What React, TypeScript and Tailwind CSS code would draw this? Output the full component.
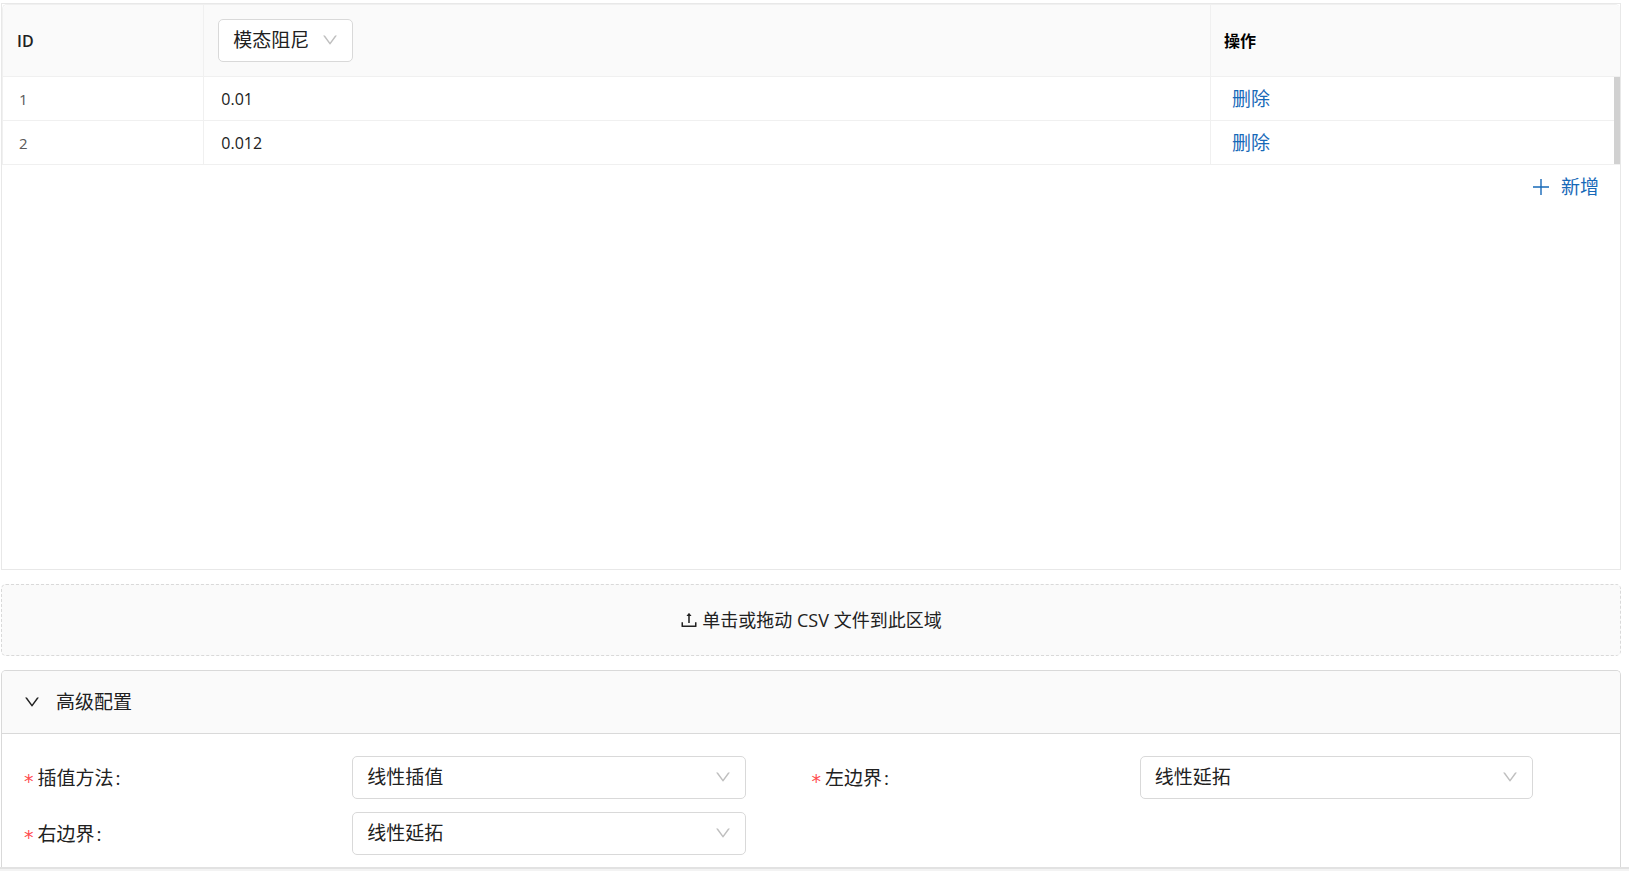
import { useState } from "react";

const rows = [
  { id: 1, value: "0.01" },
  { id: 2, value: "0.012" },
];

function ChevronDown({ className }: { className: string }) {
  return (
    <svg viewBox="64 64 896 896" fill="currentColor" aria-hidden="true" className={className}>
      <path d="M884 256h-75c-5.100 0-9.900 2.500-12.900 6.600L512 654.200 227.900 262.600c-3-4.100-7.800-6.600-12.900-6.600h-75c-6.500 0-10.300 7.400-6.500 12.700l352.600 486.100c12.800 17.600 39 17.600 51.700 0l352.600-486.100c3.900-5.300.1-12.700-6.400-12.700z" />
    </svg>
  );
}

function UploadIcon() {
  return (
    <svg viewBox="64 64 896 896" fill="currentColor" aria-hidden="true" className="size-[18px]">
      <path d="M400 317.700h73.900V656c0 4.400 3.600 8 8 8h60c4.400 0 8-3.600 8-8V317.700H624c6.700 0 10.400-7.700 6.300-12.900L518.300 163a8 8 0 0 0-12.600 0l-112 141.700c-4.100 5.300-.4 13 6.300 13zM878 626h-60c-4.400 0-8 3.600-8 8v154H214V634c0-4.400-3.600-8-8-8h-60c-4.400 0-8 3.600-8 8v198c0 17.700 14.300 32 32 32h684c17.700 0 32-14.300 32-32V634c0-4.400-3.600-8-8-8z" />
    </svg>
  );
}

function Select({ id, label, options }: { id: string; label?: string; options: string[] }) {
  return (
    <div className="relative">
      <select
        id={id}
        aria-label={label}
        className="block h-[43px] w-full appearance-none rounded-[5px] border border-[#d9d9d9] bg-white pr-10 pb-px pl-3.5 text-[19px] leading-6 text-[#212121]"
      >
        {options.map((o) => (
          <option key={o}>{o}</option>
        ))}
      </select>
      <ChevronDown className="pointer-events-none absolute top-[13px] right-[15px] size-4 text-[#bfbfbf]" />
    </div>
  );
}

function Field({ id, label, options }: { id: string; label: string; options: string[] }) {
  return (
    <div className="grid grid-cols-[10fr_12fr_2fr] items-center">
      <label htmlFor={id} className="flex items-center text-[19px] leading-6">
        <span className="mr-1 pt-1.5 font-['DejaVu_Sans',sans-serif] text-[#ff4d4f]">*</span>
        {label}
        <span className="ml-0.5">:</span>
      </label>
      <Select id={id} options={options} />
    </div>
  );
}

export default function App() {
  const [open, setOpen] = useState(true);
  return (
    <div className="flex min-h-screen flex-col bg-white pt-[3px] font-['Open_Sans','Noto_Sans_CJK_SC',sans-serif] text-[#212121]">
      <main className="mr-2 ml-px flex flex-1 flex-col gap-3.5">
        <section className="flex-1 border border-[#e8e8e8]">
          <div className="relative">
            <table className="w-full table-fixed border-separate border-spacing-0 rounded-t-[5px] border-t border-l border-[#f0f0f0] text-left">
              <colgroup>
                <col className="w-[12.450%]" />
                <col />
                <col className="w-[25.300%]" />
              </colgroup>
              <thead>
                <tr className="h-[72px]">
                  <th className="rounded-tl-[5px] border-r border-b border-[#f0f0f0] bg-[#fafafa] px-3.5 text-base font-semibold">ID</th>
                  <th className="border-r border-b border-[#f0f0f0] bg-[#fafafa] px-3.5 font-normal">
                    <div className="w-[135px]">
                      <Select id="kind" label="阻尼类型" options={["模态阻尼", "结构阻尼"]} />
                    </div>
                  </th>
                  <th className="rounded-tr-[5px] border-b border-[#f0f0f0] bg-[#fafafa] px-[13px] text-base font-bold text-black">操作</th>
                </tr>
              </thead>
              <tbody>
                {rows.map((row) => (
                  <tr key={row.id} className="h-11">
                    <td className="border-r border-b border-[#f0f0f0] px-4 pt-px text-[15px] text-[#595959]">{row.id}</td>
                    <td className="border-r border-b border-[#f0f0f0] px-[17px] pt-px text-base">{row.value}</td>
                    <td className="border-b border-[#f0f0f0] px-[21px] text-[19px] leading-6">
                      <button type="button" className="block text-[#1769b8]">删除</button>
                    </td>
                  </tr>
                ))}
              </tbody>
            </table>
            <div className="absolute right-0 bottom-px h-[87px] w-1.5 bg-[#d1d1d1]" />
          </div>
          <div className="flex justify-end pt-2.5 pr-[21px]">
            <button type="button" className="flex items-center gap-3 text-[19px] leading-6 text-[#1769b8]">
              <svg viewBox="0 0 16 16" fill="none" stroke="currentColor" strokeWidth="1.400" aria-hidden="true" className="size-4">
                <path d="M8 0v16M0 8h16" />
              </svg>
              新增
            </button>
          </div>
        </section>

        <button
          type="button"
          className="flex h-[72px] items-center justify-center gap-1 rounded-[5px] border border-dashed border-[#d9d9d9] bg-[#fafafa] text-lg"
        >
          <UploadIcon />
          单击或拖动 CSV 文件到此区域
        </button>

        <section className="rounded-t-[5px] border border-b-0 border-[#d9d9d9]">
          <button
            type="button"
            aria-expanded={open}
            onClick={() => setOpen(!open)}
            className="flex h-[63px] w-full items-center gap-4 rounded-t-[4px] border-b border-[#d9d9d9] bg-[#fafafa] px-[22px] text-[19px]"
          >
            <ChevronDown className="size-4" />
            高级配置
          </button>
          {open && (
            <form className="grid grid-cols-2 gap-y-[13px] pt-[22px] pr-[21px] pb-3 pl-[22px]">
              <Field id="method" label="插值方法" options={["线性插值", "对数插值"]} />
              <Field id="left" label="左边界" options={["线性延拓", "常数延拓"]} />
              <Field id="right" label="右边界" options={["线性延拓", "常数延拓"]} />
            </form>
          )}
        </section>
      </main>
      <div className="h-1 border-t-2 border-[#e2e2e2] bg-[#f3f3f3]" />
    </div>
  );
}
